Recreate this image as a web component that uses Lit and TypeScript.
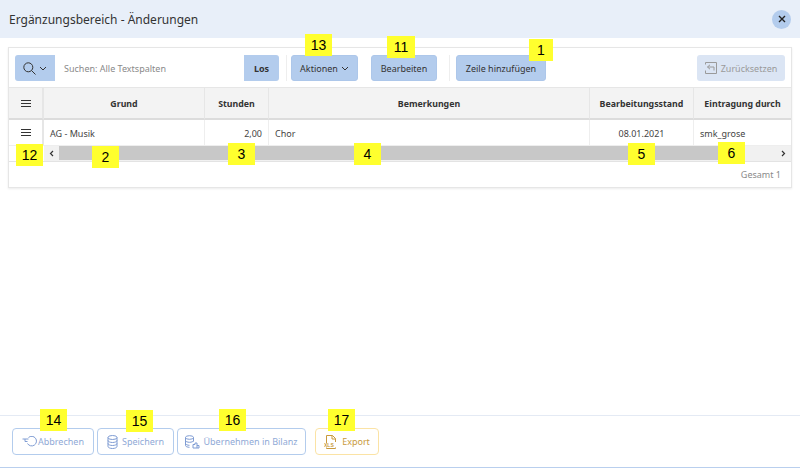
import { LitElement, html, css, svg } from "lit";
import { customElement } from "lit/decorators.js";

const badges: [string, number, number, number][] = [
  ["13", 305, 34, 27], ["11", 387, 36, 28], ["1", 529, 39, 24],
  ["12", 16, 144, 27], ["2", 92, 146, 27], ["3", 228, 143, 27], ["4", 354, 143, 27],
  ["5", 628, 143, 27], ["6", 718, 142, 27],
  ["14", 40, 409, 27], ["15", 126, 410, 27], ["16", 219, 409, 27], ["17", 328, 409, 27],
];
const burger = svg`<path d="M0 .5h10M0 3.500h10M0 6.500h10" stroke="#333" stroke-width="1.200" fill="none"/>`;

@customElement("app-root")
export class AppRoot extends LitElement {
  static styles = css`
    :host { display: block; position: relative; width: 800px; height: 472px; overflow: hidden; background: #fff; font-family: "Noto Sans", "Open Sans", sans-serif; font-size: 9px; color: #333; }
    * { box-sizing: border-box; }
    .page { display: flex; flex-direction: column; height: 472px; }
    .head { height: 38px; flex: none; background: #e8eff9; display: flex; align-items: center; justify-content: space-between; padding: 0 9px; }
    .title { font-size: 12px; color: #333; }
    .close { width: 19px; height: 19px; border-radius: 50%; background: #b3cced; display: flex; align-items: center; justify-content: center; }
    .body { flex: 1; padding: 9px 8px 0; }
    .card { border: 1px solid #e6e6e6; box-shadow: 0 1px 2px rgba(0,0,0,.08); height: 141px; display: flex; flex-direction: column; }
    .bar { height: 39px; flex: none; display: flex; align-items: flex-start; padding: 7px 6px 0; }
    .sbtn, .btn, .go { background: #b3cced; height: 26px; border-radius: 3px; display: flex; align-items: center; justify-content: center; color: #333; border: 1px solid #adc7ea; }
    .sbtn { width: 40px; border-radius: 3px 0 0 3px; gap: 3px; border: 0; }
    .input { width: 189px; height: 26px; display: flex; align-items: center; padding-left: 9px; color: #8a8a8a; background: #fff; }
    .go { width: 35px; border-radius: 0 3px 3px 0; font-weight: 700; border: 0; }
    .sep { width: 1px; height: 26px; background: #eee; flex: none; }
    .s1 { margin: 0 4px 0 7px; }
    .s2 { margin: 0 6px 0 12px; }
    .btn { gap: 3px; }
    .a { width: 67px; }
    .b { width: 66px; margin-left: 13px; }
    .c { width: 90px; }
    .reset { margin-left: auto; width: 88px; height: 26px; border-radius: 3px; background: #dbe5f4; color: #9a9a9a; display: flex; align-items: center; justify-content: center; gap: 4px; }
    .row { display: grid; grid-template-columns: 35px 161px 64px 321px 104px 97px; }
    .th { height: 33px; padding-top: 1px; background: #f3f3f3; border-top: 1px solid #e6e6e6; border-bottom: 2px solid #dcdcdc; border-right: 1px solid #e6e6e6; display: flex; align-items: center; justify-content: center; font-weight: 700; color: #333; font-size: 8.800px; }
    .th:first-child { border-right-width: 2px; }
    .th:last-child { border-right: 0; }
    .td { height: 25px; border-right: 1px solid #eee; display: flex; align-items: center; padding: 1px 6px 0; color: #444; }
    .td:first-child { justify-content: center; border-right-width: 2px; border-color: #e6e6e6; padding: 0; }
    .td:last-child { border-right: 0; }
    .right { justify-content: flex-end; }
    .center { justify-content: center; }
    .scroll { height: 17px; display: flex; border-top: 1px solid #eee; border-bottom: 1px solid #e3e3e3; }
    .spacer { width: 35px; flex: none; }
    .sb { flex: 1; display: flex; background: #f1f1f1; }
    .arrow { width: 15px; display: flex; align-items: center; justify-content: center; flex: none; }
    .track { width: 686px; background: #c8c8c8; margin-bottom: 1px; margin-right: auto; }
    .foot { flex: 1; display: flex; align-items: center; justify-content: flex-end; padding-right: 10px; color: #8a8a8a; }
    .actions { height: 52px; flex: none; border-top: 1px solid #e4eaf4; display: flex; align-items: flex-start; padding: 12px 12px 0; }
    .out { height: 27px; border: 1px solid #b3cced; border-radius: 4px; color: #8fa9d6; display: flex; align-items: center; justify-content: center; margin-right: 3px; }
    .w1 { width: 82px; gap: 1px; }
    .w2 { width: 77px; gap: 4px; }
    .w3 { width: 129px; gap: 3px; }
    .y { width: 64px; gap: 3px; border-color: #fbe3a5; color: #c99a3d; margin-left: 6px; }
    .line { height: 1px; background: #b9cfee; flex: none; margin-bottom: 4px; }
    .badge { position: absolute; background: #ffff2e; color: #000; font-family: "Liberation Sans", Arial, sans-serif; font-size: 14px; display: flex; align-items: center; justify-content: center; height: 22px; }
  `;

  render() {
    return html`
      <div class="page">
        <div class="head">
          <span class="title">Ergänzungsbereich - Änderungen</span>
          <span class="close"><svg width="8" height="8" viewBox="0 0 8 8"><path d="M1 1l6 6M7 1L1 7" stroke="#222" stroke-width="1.400"/></svg></span>
        </div>
        <div class="body">
          <div class="card">
            <div class="bar">
              <span class="sbtn">
                <svg width="13" height="13" viewBox="0 0 13 13" fill="none" stroke="#333" stroke-width="1"><circle cx="5.300" cy="5.300" r="4.500"/><path d="M8.500 8.500l4 4"/></svg>
                <svg width="8" height="5" viewBox="0 0 8 5" fill="none" stroke="#333" stroke-width="1"><path d="M1 1l3 3 3-3"/></svg>
              </span>
              <span class="input">Suchen: Alle Textspalten</span>
              <span class="go">Los</span>
              <span class="sep s1"></span>
              <span class="btn a">Aktionen <svg width="8" height="5" viewBox="0 0 8 5" fill="none" stroke="#333" stroke-width="1"><path d="M1 1l3 3 3-3"/></svg></span>
              <span class="btn b">Bearbeiten</span>
              <span class="sep s2"></span>
              <span class="btn c">Zeile hinzufügen</span>
              <span class="reset">
                <svg width="12" height="12" viewBox="0 0 12 12" fill="none" stroke="#9a9a9a"><path d="M.5 2.500V.5h11v11H.5V8.500"/><path d="M2.500 5h6.500v3.500M2.500 5l2.500-2.200M2.500 5l2.500 2.200"/></svg>
                Zurücksetzen
              </span>
            </div>
            <div class="row">
              <div class="th"><svg width="10" height="7">${burger}</svg></div>
              <div class="th">Grund</div>
              <div class="th">Stunden</div>
              <div class="th">Bemerkungen</div>
              <div class="th">Bearbeitungsstand</div>
              <div class="th">Eintragung durch</div>
            </div>
            <div class="row">
              <div class="td"><svg width="10" height="7">${burger}</svg></div>
              <div class="td">AG - Musik</div>
              <div class="td right">2,00</div>
              <div class="td">Chor</div>
              <div class="td center">08.01.2021</div>
              <div class="td">smk_grose</div>
            </div>
            <div class="scroll">
              <div class="spacer"></div>
              <div class="sb">
                <div class="arrow"><svg width="5" height="7" viewBox="0 0 5 7" fill="none" stroke="#333" stroke-width="1.200"><path d="M4 1L1.500 3.500 4 6"/></svg></div>
                <div class="track"></div>
                <div class="arrow"><svg width="5" height="7" viewBox="0 0 5 7" fill="none" stroke="#333" stroke-width="1.200"><path d="M1 1l2.500 2.500L1 6"/></svg></div>
              </div>
            </div>
            <div class="foot">Gesamt 1</div>
          </div>
        </div>
        <div class="actions">
          <span class="out w1">
            <svg width="15" height="12" viewBox="0 0 15 12" fill="none" stroke="#7f9cd3"><path d="M.5 3h6"/><path d="M3 3v2.500h2.500"/><path d="M6.500 1.500a4.800 4.800 0 1 1-1 6"/></svg>Abbrechen</span>
          <span class="out w2">
            <svg width="11" height="14" viewBox="0 0 11 14" fill="none" stroke="#7f9cd3"><ellipse cx="5.500" cy="2.500" rx="4.500" ry="2"/><path d="M1 2.500v9c0 1 2 2 4.500 2s4.500-1 4.500-2v-9M1 5.500c0 1 2 2 4.500 2s4.500-1 4.500-2M1 8.500c0 1 2 2 4.500 2s4.500-1 4.500-2"/></svg>Speichern</span>
          <span class="out w3">
            <svg width="15" height="14" viewBox="0 0 15 14" fill="none" stroke="#7f9cd3"><ellipse cx="4.500" cy="2.500" rx="4" ry="1.800"/><path d="M.5 2.500v8c0 1 2 1.800 4 1.800M8.500 2.500v4M.5 5.500c0 1 2 1.800 4 1.800s4-.8 4-1.800M.5 8.500c0 1 2 1.800 4 1.800"/><path d="M8 13V9.500h2V8h2v5zM12 10.500h2V13h-2"/></svg>Übernehmen in Bilanz</span>
          <span class="out y">
            <svg width="15" height="14" viewBox="0 0 15 14" fill="none" stroke="#c99a3d"><path d="M2.500 8V.5h6l3 3V7M2.500 12.500v1h9v-1M8 .5V4h3.500"/><text x="0" y="12" font-size="5" font-weight="700" fill="#c99a3d" stroke="none" font-family="Liberation Sans">XLS</text></svg>Export</span>
        </div>
        <div class="line"></div>
      </div>
      ${badges.map(([t, x, y, w]) => html`<span class="badge" style="left:${x}px;top:${y}px;width:${w}px">${t}</span>`)}
    `;
  }
}
